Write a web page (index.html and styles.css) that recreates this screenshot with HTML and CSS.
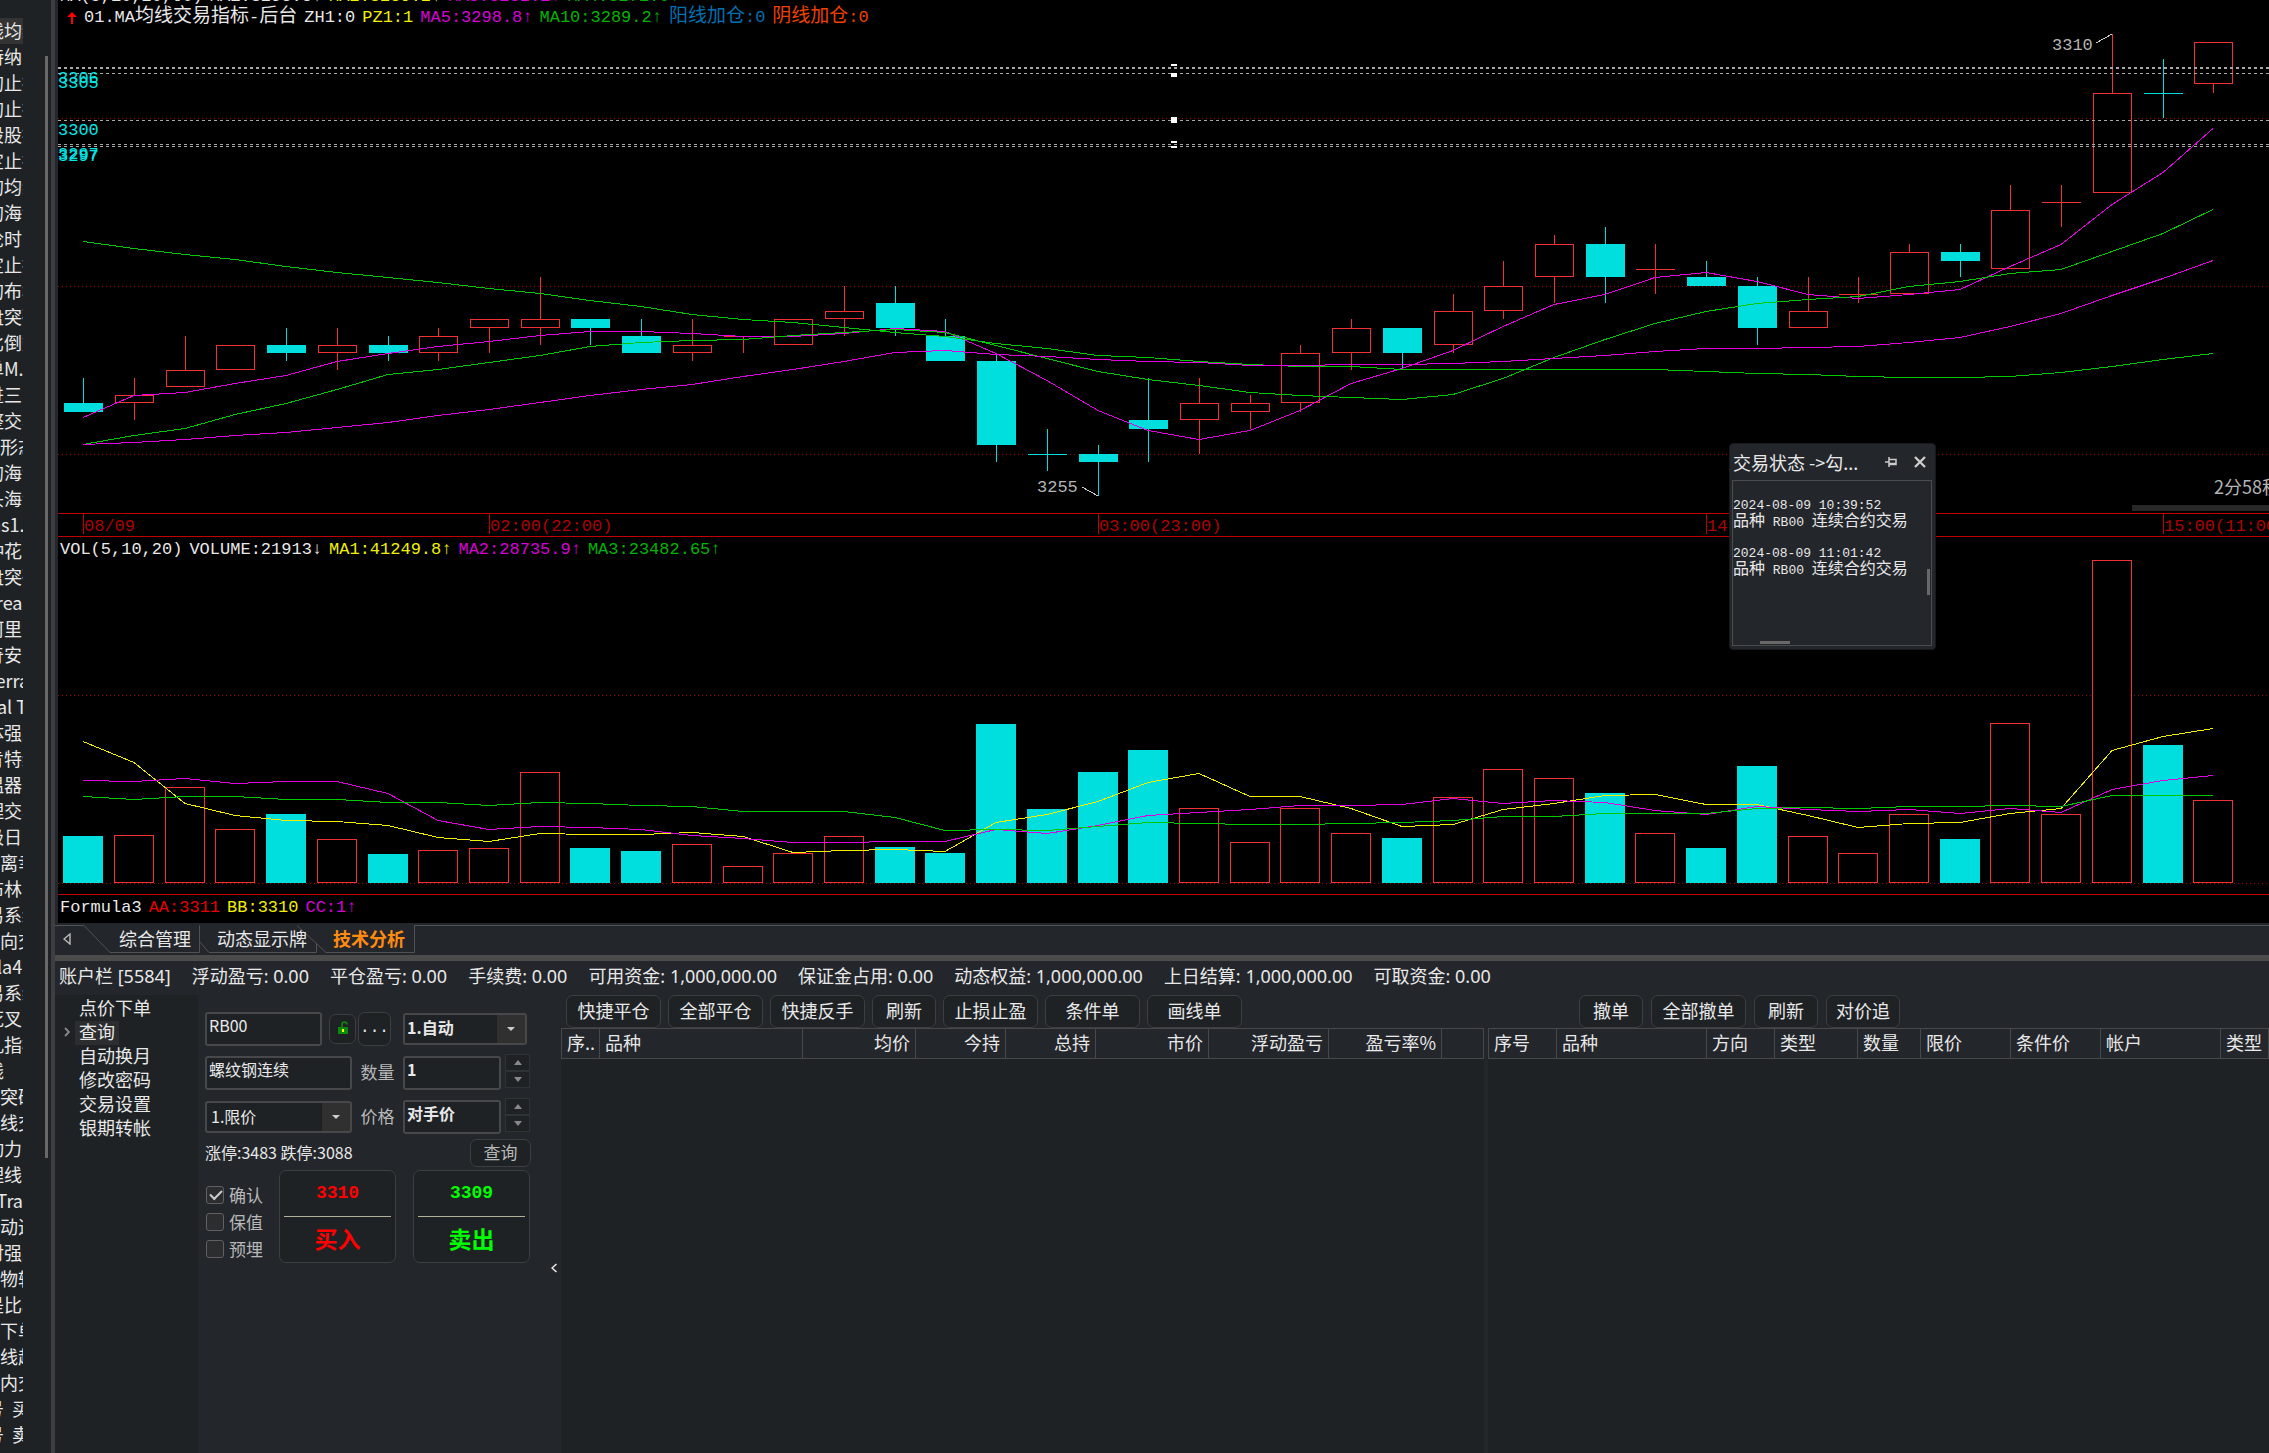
FILE: index.html
```html
<!DOCTYPE html>
<html lang="zh-CN">
<head>
  <meta charset="UTF-8">
  <meta name="viewport" content="width=device-width, initial-scale=1.0">
  <title>技术分析 - RB00 螺纹钢连续</title>
  <link rel="stylesheet" href="styles.css">
</head>
<body>
<div class="app">

  <aside class="sidebar">
    <ul class="formula-list" id="formulaList"></ul>
    <div class="sidebar-thumb"></div>
  </aside>

  <main class="main">

    <!-- K线 + 成交量 -->
    <section class="charts">
      <div class="pane">
        <svg id="priceChart" class="plot"></svg>
        <div class="legend legend-top">
          <span class="white">MA(5,10,20,60)</span>
          <span class="white">MA1:3298.8↑</span>
          <span class="yellow">MA2:3289.2↑</span>
          <span class="magenta">MA3:3282.1↑</span>
          <span class="green">MA4:3272.0↑</span>
        </div>
        <div class="legend legend-second">
          <svg class="up-mark" viewBox="0 0 10 12"><path d="M5 0 10 5H6V12H4V5H0Z" fill="#f00"/></svg>
          <span class="white">01.MA<b>均线交易指标</b>-<b>后台</b></span>
          <span class="white">ZH1:0</span>
          <span class="yellow">PZ1:1</span>
          <span class="magenta">MA5:3298.8↑</span>
          <span class="green">MA10:3289.2↑</span>
          <span class="blue"><b>阳线加仓</b>:0</span>
          <span class="orange"><b>阴线加仓</b>:0</span>
        </div>
        <div class="countdown">2分58秒</div>
        <div class="pane-thumb"></div>
      </div>

      <div class="time-axis"><svg id="timeAxis" class="plot"></svg></div>

      <div class="pane">
        <svg id="volumeChart" class="plot"></svg>
        <div class="legend">
          <span class="white">VOL(5,10,20)</span>
          <span class="white">VOLUME:21913↓</span>
          <span class="yellow">MA1:41249.8↑</span>
          <span class="magenta">MA2:28735.9↑</span>
          <span class="green">MA3:23482.65↑</span>
        </div>
      </div>

      <div class="formula-pane">
        <div class="legend">
          <span class="white">Formula3</span>
          <span class="red">AA:3311</span>
          <span class="yellow">BB:3310</span>
          <span class="magenta">CC:1↑</span>
        </div>
      </div>

      <div class="popup">
        <div class="popup-title">
          <span>交易状态 -&gt;勾...</span>
          <svg class="pin" viewBox="0 0 12 12"><path d="M0 6H4M4 1V11M4 3.5H11V8.5H4M4 7.5H11" fill="none" stroke="#ccc" stroke-width="1.5"/></svg>
          <svg class="close" viewBox="0 0 12 12"><path d="M1 1 11 11M11 1 1 11" stroke="#ccc" stroke-width="2.4"/></svg>
        </div>
        <div class="popup-body">
          <p>2024-08-09 10:39:52</p>
          <p><b>品种</b> RB00 <b>连续合约交易</b></p>
          <p class="spaced">2024-08-09 11:01:42</p>
          <p><b>品种</b> RB00 <b>连续合约交易</b></p>
          <i class="thumb-v"></i>
          <i class="thumb-h"></i>
        </div>
      </div>
    </section>

    <nav class="tabs">
      <svg class="tab-lines" width="362" height="32"><path d="M0 2.5H29L55 29.5H144.500V2.5M145 19 154 29.500H261.500V20M242 2.5 271 29.500H359.500V2.500" fill="none" stroke="#505255"/></svg>
      <svg class="tab-prev" viewBox="0 0 8 12"><path d="M7 1V11L1 6Z" fill="none" stroke="#bbb" stroke-width="1.4"/></svg>
      <a href="#">综合管理</a>
      <a href="#">动态显示牌</a>
      <a href="#" class="active">技术分析</a>
    </nav>

    <div class="splitter"></div>

    <div class="account">
      <span>账户栏 [5584]</span>
      <span>浮动盈亏: 0.00</span>
      <span>平仓盈亏: 0.00</span>
      <span>手续费: 0.00</span>
      <span>可用资金: 1,000,000.00</span>
      <span>保证金占用: 0.00</span>
      <span>动态权益: 1,000,000.00</span>
      <span>上日结算: 1,000,000.00</span>
      <span>可取资金: 0.00</span>
    </div>

    <section class="trade">
      <ul class="tree">
        <li><a href="#">点价下单</a></li>
        <li class="selected"><svg viewBox="0 0 6 10"><path d="M1 1 5 5 1 9" fill="none" stroke="#888" stroke-width="1.8"/></svg><a href="#">查询</a></li>
        <li><a href="#">自动换月</a></li>
        <li><a href="#">修改密码</a></li>
        <li><a href="#">交易设置</a></li>
        <li><a href="#">银期转帐</a></li>
      </ul>

      <form class="order">
        <div class="order-row">
          <input class="field w-code" type="text" value="RB00" aria-label="合约代码">
          <button type="button" class="btn btn-lock" aria-label="锁定">
            <svg viewBox="0 0 12 14"><path d="M5 6V3.500A2.500 2.500 0 0 1 10 3.500" fill="none" stroke="#0a8a0a" stroke-width="1.6"/><rect x="1" y="6" width="10" height="7" fill="#0a8a0a"/><rect x="5" y="8" width="2" height="3" fill="#ff0"/></svg>
          </button>
          <button type="button" class="btn btn-more">...</button>
          <span class="combo w-auto"><select class="strong" aria-label="开平"><option>1.自动</option></select></span>
        </div>
        <div class="order-row">
          <input class="field w-name" type="text" value="螺纹钢连续" aria-label="合约名称">
          <label for="qty">数量</label>
          <input class="field strong w-num" type="text" id="qty" value="1">
          <span class="spin"><button type="button" aria-label="增加数量"></button><button type="button" class="down" aria-label="减少数量"></button></span>
        </div>
        <div class="order-row">
          <span class="combo w-name"><select aria-label="报价方式"><option>1.限价</option></select></span>
          <label for="price">价格</label>
          <input class="field strong w-num" type="text" id="price" value="对手价">
          <span class="spin"><button type="button" aria-label="提高价格"></button><button type="button" class="down" aria-label="降低价格"></button></span>
        </div>
        <div class="order-row limits">
          <span>涨停:3483 跌停:3088</span>
          <button type="button" class="btn btn-query">查询</button>
        </div>
        <div class="order-row actions">
          <div class="checks">
            <label><input type="checkbox" checked>确认</label>
            <label><input type="checkbox">保值</label>
            <label><input type="checkbox">预埋</label>
          </div>
          <button type="button" class="btn deal buy"><span>3310</span><strong>买入</strong></button>
          <button type="button" class="btn deal sell"><span>3309</span><strong>卖出</strong></button>
        </div>
        <svg class="collapse" viewBox="0 0 6 10"><path d="M5.500 1 1 5 5.500 9" fill="none" stroke="#eee" stroke-width="1.500"/></svg>
      </form>

      <div class="positions">
        <div class="toolbar">
          <button type="button" class="btn wide">快捷平仓</button>
          <button type="button" class="btn wide">全部平仓</button>
          <button type="button" class="btn wide">快捷反手</button>
          <button type="button" class="btn narrow">刷新</button>
          <button type="button" class="btn wide">止损止盈</button>
          <button type="button" class="btn wide">条件单</button>
          <button type="button" class="btn wide">画线单</button>
        </div>
        <table>
          <colgroup><col class="c38"><col class="c203"><col class="c113"><col class="c90"><col class="c90"><col class="c113"><col class="c120"><col class="c113"><col></colgroup>
          <thead><tr><th>序..</th><th>品种</th><th class="num">均价</th><th class="num">今持</th><th class="num">总持</th><th class="num">市价</th><th class="num">浮动盈亏</th><th class="num">盈亏率%</th><th></th></tr></thead>
        </table>
      </div>

      <div class="orders">
        <div class="toolbar">
          <button type="button" class="btn narrow">撤单</button>
          <button type="button" class="btn wide">全部撤单</button>
          <button type="button" class="btn narrow">刷新</button>
          <button type="button" class="btn medium">对价追</button>
        </div>
        <table>
          <colgroup><col class="c68"><col class="c150"><col class="c68"><col class="c83"><col class="c63"><col class="c90"><col class="c90"><col class="c120"><col></colgroup>
          <thead><tr><th>序号</th><th>品种</th><th>方向</th><th>类型</th><th>数量</th><th>限价</th><th>条件价</th><th>帐户</th><th>类型</th></tr></thead>
        </table>
      </div>
    </section>

  </main>
</div>
<script src="chart.js"></script>
</body>
</html>
```
FILE: styles.css
```css
* { box-sizing: border-box; }

html, body { height: 100%; }

body {
  margin: 0;
  background: #23262b;
  color: #e8e8e8;
  font-family: "Noto Sans CJK SC", "Noto Sans", sans-serif;
  font-size: 18px;
  line-height: 24px;
  overflow: hidden;
}

a { color: inherit; text-decoration: none; }

ul { list-style: none; margin: 0; padding: 0; }

button, input, select {
  font: inherit;
  color: inherit;
}

.app {
  display: flex;
  height: 100vh;
}

/* formula list on the left */
.sidebar {
  position: relative;
  flex: none;
  width: 55px;
  padding-top: 18px;
  background: #1e2225;
  border-right: 4px solid #3c3e41;
  overflow: hidden;
}

.formula-list { width: 23px; }

.formula-list li {
  height: 26px;
  line-height: 24px;
  white-space: pre;
  overflow: hidden;
}

.formula-list li.current { background: #333; }

.formula-list .cut { margin-left: -14px; }

.sidebar-thumb {
  position: absolute;
  left: 45px;
  top: 56px;
  bottom: 295px;
  width: 3px;
  background: #686868;
}

.main {
  flex: 1;
  min-width: 0;
  display: grid;
  grid-template-rows: 923fr 32px 6px 34px 458fr;
}

/* charts */
.charts {
  position: relative;
  display: grid;
  grid-template-rows: 513fr 24px 357fr 29px;
  min-height: 0;
  margin-left: 3px;
  background: #000;
}

.pane, .time-axis {
  position: relative;
  min-height: 0;
  overflow: hidden;
}

.plot {
  position: absolute;
  width: 100%;
  height: 100%;
  shape-rendering: crispEdges;
}

.time-axis {
  border-top: 1px solid #c00000;
  border-bottom: 1px solid #c00000;
}

.formula-pane { border-top: 1px solid #c00000; }

.legend {
  position: relative;
  display: flex;
  align-items: center;
  gap: 7px;
  height: 25px;
  padding-left: 2px;
  font-family: "Liberation Mono", "Noto Sans CJK SC", monospace;
  font-size: 17px;
  white-space: nowrap;
}

.legend b, .popup b { font-weight: 400; }

.legend b { font-size: 19px; }

.legend-top { margin-top: -16px; }

.legend-second { margin-top: -4px; }

.up-mark { width: 10px; height: 12px; margin-left: 7px; }

.white { color: #e8e8e8; }
.yellow { color: #f0f000; }
.magenta { color: #d800d8; }
.green { color: #00b400; }
.blue { color: #0070b0; }
.orange { color: #f04000; }
.red { color: #e80000; }

.plot text {
  font-family: "Liberation Mono", monospace;
  font-size: 17px;
}

.countdown {
  position: absolute;
  right: -11px;
  bottom: 15px;
  color: #b4b4b4;
}

.pane-thumb {
  position: absolute;
  right: 0;
  bottom: 2px;
  width: 137px;
  height: 6px;
  background: #282828;
}

/* floating status window */
.popup {
  position: absolute;
  right: 333px;
  top: 443px;
  width: 207px;
  height: 207px;
  display: flex;
  flex-direction: column;
  padding: 0 3px 3px 2px;
  background: #23262b;
  border: 1px solid #17191b;
  border-radius: 4px;
}

.popup-title {
  display: flex;
  align-items: center;
  height: 36px;
  padding: 0 6px 0 1px;
}

.popup-title span { flex: 1; }

.pin { width: 12px; height: 12px; margin-right: 17px; }

.close { width: 12px; height: 12px; }

.popup-body {
  position: relative;
  flex: 1;
  padding-top: 17px;
  border: 1px solid #4a4c4f;
  font-family: "Liberation Mono", "Noto Sans CJK SC", monospace;
  font-size: 13px;
  line-height: 16px;
  white-space: nowrap;
}

.popup-body b { font-size: 16px; }

.popup-body p { margin: 0; height: 16px; }

.popup-body .spaced { margin-top: 16px; }

.thumb-v, .thumb-h { position: absolute; background: #686868; }

.thumb-v { right: 1px; top: 88px; width: 3px; height: 26px; }

.thumb-h { left: 27px; bottom: 1px; width: 30px; height: 3px; }

/* page tabs */
.tabs {
  position: relative;
  display: flex;
  align-items: center;
  gap: 26px;
  padding-left: 8px;
}

.tabs::after {
  content: "";
  position: absolute;
  left: 359px;
  right: 0;
  top: 2px;
  height: 1px;
  background: #505255;
}

.tab-lines { position: absolute; left: 0; top: 0; }

.tab-prev { width: 8px; height: 12px; margin-right: 22px; }

.tabs a { position: relative; padding-bottom: 2px; }

.tabs .active { color: #ff8c10; font-weight: 700; }

.splitter { background: #4b4b4b; }

.account {
  display: flex;
  align-items: center;
  gap: 21px;
  padding: 0 0 4px 4px;
  font-family: "Noto Sans", "Noto Sans CJK SC", sans-serif;
  white-space: nowrap;
}

/* trading panel */
.trade {
  display: flex;
  min-height: 0;
}

.tree {
  flex: none;
  width: 143px;
  background: #1e2225;
}

.tree li {
  position: relative;
  height: 24px;
  padding-left: 20px;
}

.tree a {
  display: inline-block;
  height: 24px;
  padding: 0 4px;
  line-height: 21px;
}

.tree .selected a { background: #2c2d2f; }

.tree svg {
  position: absolute;
  left: 9px;
  top: 8px;
  width: 6px;
  height: 10px;
}

.order {
  position: relative;
  flex: none;
  display: flex;
  flex-direction: column;
  gap: 8px;
  width: 363px;
  padding: 16px 30px 0 7px;
  font-size: 16px;
}

.order-row {
  display: flex;
  align-items: center;
  height: 36px;
}

.field, .combo {
  height: 34px;
  border: 2px solid #47484a;
  border-radius: 3px;
  background: #1e2225;
}

.field { padding: 0 2px 8px; line-height: 22px; }

.strong { font-weight: 700; }

.w-code { width: 117px; margin-right: 7px; }
.w-name { width: 147px; }
.w-num { width: 98px; margin-right: 4px; }
.w-auto { width: 124px; }

.combo { position: relative; height: 32px; }

.combo select {
  display: block;
  width: 100%;
  height: 28px;
  padding: 0 4px 3px;
  border: 0;
  background: none;
  appearance: none;
}

.combo .strong { padding: 0 2px 7px; }

.combo::after {
  content: "";
  position: absolute;
  right: 0;
  top: 0;
  width: 28px;
  height: 28px;
  background: #303031;
  pointer-events: none;
}

.combo::before {
  content: "";
  position: absolute;
  z-index: 1;
  right: 10px;
  top: 12px;
  border: 4px solid transparent;
  border-top-color: #ccc;
  border-bottom: 0;
  pointer-events: none;
}

.order-row > label {
  width: 51px;
  padding-bottom: 3px;
  text-align: center;
  color: #b8b8b8;
  font-size: 17px;
}

.spin {
  display: flex;
  flex-direction: column;
  width: 25px;
  margin-bottom: 4px;
}

.spin button {
  display: flex;
  align-items: center;
  justify-content: center;
  height: 17px;
  padding: 0;
  border: 1px solid #303335;
  background: #1e2225;
}

.spin button::before {
  content: "";
  border: 4px solid transparent;
  border-top: 0;
  border-bottom: 5px solid #888;
}

.spin .down::before { transform: rotate(180deg); }

.btn {
  padding: 0 0 3px;
  border: 1px solid #3c3e41;
  border-radius: 7px;
  background: #1e2225;
  white-space: nowrap;
}

.btn-lock { width: 27px; height: 30px; margin-right: 2px; }

.btn-lock svg { display: block; width: 12px; height: 14px; margin: auto; }

.btn-more {
  width: 33px;
  height: 34px;
  margin-right: 12px;
  font-family: "Liberation Mono", monospace;
}

.limits {
  justify-content: space-between;
  height: 28px;
  margin-top: -4px;
}

.limits span { padding-bottom: 2px; }

.btn-query { width: 61px; height: 28px; color: #b8b8b8; font-size: 17px; }

.actions { height: 93px; gap: 17px; margin-top: -5px; }

.checks {
  display: flex;
  flex-direction: column;
  flex: none;
  gap: 3px;
  width: 57px;
  padding-top: 10px;
}

.checks label {
  display: flex;
  align-items: center;
  gap: 5px;
  color: #b8b8b8;
  font-size: 17px;
  white-space: nowrap;
}

.checks input {
  appearance: none;
  flex: none;
  width: 18px;
  height: 18px;
  margin: 0 0 0 1px;
  border: 1px solid #606060;
  border-radius: 3px;
  background: #2c2d2f;
}

.checks input:checked::before {
  content: "";
  display: block;
  width: 10px;
  height: 5px;
  margin: 3px;
  border: solid #ccc;
  border-width: 0 0 2px 2px;
  transform: rotate(-45deg);
}

.deal {
  display: flex;
  flex: none;
  flex-direction: column;
  width: 117px;
  height: 93px;
  padding: 0 4px;
}

.deal span {
  height: 46px;
  line-height: 44px;
  border-bottom: 1px solid #b4b09c;
  font-family: "Liberation Mono", monospace;
  font-size: 18px;
  font-weight: 700;
}

.deal strong { line-height: 43px; font-size: 23px; }

.deal span, .deal strong { width: 100%; }

.buy { color: #f00; }

.sell { color: #0f0; }

.collapse {
  position: absolute;
  right: 4px;
  top: 268px;
  width: 6px;
  height: 10px;
}

.positions, .orders {
  min-width: 0;
  background: #1e2225;
}

.positions { flex: none; width: 923px; }

.orders { flex: 1; margin-left: 4px; overflow: hidden; }

.toolbar {
  display: flex;
  gap: 7px;
  height: 33px;
  padding-left: 5px;
  background: #23262b;
}

.orders .toolbar { padding-left: 91px; gap: 8px; }

.wide { width: 95px; }
.medium { width: 74px; }
.narrow { width: 64px; }

table {
  width: 100%;
  table-layout: fixed;
  border-collapse: collapse;
}

th {
  height: 30px;
  padding: 0 5px 3px;
  border: 1px solid #47484a;
  background: #23262b;
  font-weight: 400;
  line-height: 24px;
  text-align: left;
  white-space: nowrap;
}

.num { text-align: right; }

.c38 { width: 38px; }
.c63 { width: 63px; }
.c68 { width: 68px; }
.c83 { width: 83px; }
.c90 { width: 90px; }
.c113 { width: 113px; }
.c120 { width: 120px; }
.c150 { width: 150px; }
.c203 { width: 203px; }
```
FILE: chart.js
```js
const UP = '#f03232';
const DOWN = '#00dede';
const GRID = '#a00000';

// open, high, low, close (minus 3200)
const candles = [
  [66, 69, 65, 65], [66, 69, 64, 67], [68, 74, 68, 70], [70, 73, 70, 73], [73, 75, 71, 72],
  [72, 75, 70, 73], [73, 74, 71, 72], [72, 75, 71, 74], [75, 76, 72, 76], [75, 81, 73, 76],
  [76, 76, 73, 75], [74, 76, 72, 72], [72, 76, 71, 73], [74, 74, 72, 74], [73, 76, 73, 76],
  [76, 80, 74, 77], [78, 80, 74, 75], [74, 76, 71, 71], [71, 72, 59, 61], [60, 63, 58, 60, 1],
  [60, 61, 55, 59], [64, 69, 59, 63], [64, 69, 60, 66], [65, 67, 63, 66], [66, 73, 65, 72],
  [72, 76, 70, 75], [75, 75, 70, 72], [73, 79, 72, 77], [77, 83, 76, 80], [81, 86, 78, 85],
  [85, 87, 78, 81], [82, 85, 79, 82], [81, 83, 80, 80], [80, 81, 73, 75], [75, 81, 75, 77],
  [79, 81, 78, 79], [79, 85, 79, 84], [84, 85, 81, 83], [82, 92, 82, 89], [90, 92, 87, 90],
  [91, 110, 91, 103], [103, 107, 100, 103, 1], [104, 109, 103, 109]
];

// thousands
const volumes = [
  12.5, 12.8, 25.6, 14.2, 18.4, 11.7, 7.5, 8.8, 9.1, 29.6, 9.3, 8.5, 10.4, 4.5, 8.0,
  12.5, 9.6, 8.0, 42.2, 19.5, 29.6, 35.5, 20.0, 10.7, 19.8, 13.1, 12.0, 22.7, 30.4, 27.8,
  23.8, 13.1, 9.3, 31.2, 12.3, 8.0, 18.4, 11.5, 42.7, 18.4, 86.0, 36.8, 21.9
];

const ma60 = [
  85.3, 84.5, 83.8, 83.2, 82.4, 81.7, 81.0, 80.4, 79.7, 79.1, 78.3, 77.6, 76.7, 76.1, 75.7,
  75.1, 74.5, 74.0, 73.2, 72.6, 71.8, 71.5, 71.0, 70.7, 70.4, 70.4, 70.1, 70.1, 70.1, 70.1,
  70.1, 70.1, 69.9, 69.6, 69.5, 69.2, 69.1, 69.1, 69.2, 69.7, 70.5, 71.3, 72.0
];

const timeLabels = { 0: '08/09', 8: '02:00(22:00)', 20: '03:00(23:00)', 32: '14:00(10:00)', 41: '15:00(11:00)' };

// head = values for the bars that have no full window yet
function ma(values, n, head) {
  return values.map((v, i) => {
    if (i < n - 1) return head[i];
    return values.slice(i - n + 1, i + 1).reduce((a, b) => a + b, 0) / n;
  });
}

function add(svg, tag, attrs, text) {
  const el = document.createElementNS('http://www.w3.org/2000/svg', tag);
  for (const key in attrs) el.setAttribute(key, attrs[key]);
  if (text) el.textContent = text;
  svg.appendChild(el);
}

function centerX(svg, i) {
  return Math.round(svg.clientWidth / 43.6 * (i + 0.5));
}

function hline(svg, y, color, dash) {
  y = Math.floor(y) + 0.5;
  add(svg, 'line', { x1: 0, x2: svg.clientWidth, y1: y, y2: y, stroke: color, 'stroke-dasharray': dash });
}

function curve(svg, values, toY, color) {
  const points = values.map((v, i) => centerX(svg, i) + ',' + (Math.floor(toY(v)) + 0.5)).join(' ');
  add(svg, 'polyline', { points: points, fill: 'none', stroke: color });
}

function box(svg, i, width, top, bottom, color, filled) {
  const x = centerX(svg, i) - Math.floor(width / 2);
  if (filled) {
    add(svg, 'rect', { x: x, y: top, width: width, height: Math.max(bottom - top, 1), fill: color });
  } else {
    add(svg, 'rect', { x: x + 0.5, y: top + 0.5, width: width - 1, height: Math.max(bottom - top - 1, 0), fill: '#000', stroke: color });
  }
}

function drawPrice() {
  const svg = document.getElementById('priceChart');
  svg.innerHTML = '';
  const toY = p => (114.1 - p) / 61.1 * svg.clientHeight;

  [100, 80, 60].forEach(p => hline(svg, toY(p), GRID, '1 3'));

  candles.forEach((c, i) => {
    const [open, high, low, close, falling] = c;
    const down = close < open || falling;
    const color = down ? DOWN : UP;
    const x = centerX(svg, i) + 0.5;
    add(svg, 'line', { x1: x, x2: x, y1: Math.floor(toY(high)), y2: Math.floor(toY(low)), stroke: color });
    const top = Math.floor(toY(Math.max(open, close)));
    const bottom = Math.floor(toY(Math.min(open, close)));
    box(svg, i, 39, top, bottom, color, down || open === close);
  });

  // price alert lines
  [106.1, 105.9, 105.4, 99.8, 96.9, 96.7].forEach(p => hline(svg, toY(p), '#a8a8a8', '3 3'));
  [[106.4, 2], [105.4, 4], [100.1, 6], [97.3, 2], [96.6, 2]].forEach(([p, h]) => {
    add(svg, 'rect', { x: Math.round(svg.clientWidth * 0.5035), y: Math.floor(toY(p)), width: 6, height: h, fill: '#fff' });
  });
  [[3306, 106], [3305, 105.4], [3300, 99.8], [3297, 96.9], [3297, 96.7]].forEach(([label, p]) => {
    add(svg, 'text', { x: 0, y: Math.floor(toY(p)) + 15, fill: '#00e8e8' }, label);
  });

  const closes = candles.map(c => c[3]);
  curve(svg, ma(closes, 5, [64.4, 67, 67.4, 68.4]), toY, '#e000e0');
  curve(svg, ma(closes, 10, [61.2, 62.2, 63.1, 64.7, 66.1, 67.7, 69.5, 70.1, 70.9]), toY, '#00c800');
  curve(svg, ma60, toY, '#00c800');
  curve(svg, ma(closes, 20, [61.2, 61.4, 61.7, 62.2, 62.6, 63.2, 63.8, 64.6, 65.3, 66.2,
    67, 67.7, 68.3, 69.2, 70.1, 71.1, 72.1, 72.3, 71.9]), toY, '#e000e0');

  // highest and lowest price
  const hx = centerX(svg, 40), hy = Math.floor(toY(110));
  add(svg, 'line', { x1: hx - 16, y1: hy + 9, x2: hx, y2: hy, stroke: '#ccc' });
  add(svg, 'text', { x: hx - 60, y: hy + 16, fill: '#b4b4b4' }, '3310');
  const lx = centerX(svg, 20), ly = Math.floor(toY(55));
  add(svg, 'line', { x1: lx - 16, y1: ly - 9, x2: lx, y2: ly, stroke: '#ccc' });
  add(svg, 'text', { x: lx - 61, y: ly - 4, fill: '#b4b4b4' }, '3255');
}

function drawTimes() {
  const svg = document.getElementById('timeAxis');
  svg.innerHTML = '';
  for (const i in timeLabels) {
    const x = centerX(svg, Number(i));
    add(svg, 'line', { x1: x + 0.5, x2: x + 0.5, y1: 0, y2: 20, stroke: '#c00000' });
    add(svg, 'text', { x: x + 1, y: 17, fill: '#b00000' }, timeLabels[i]);
  }
}

function drawVolume() {
  const svg = document.getElementById('volumeChart');
  svg.innerHTML = '';
  const toY = v => svg.clientHeight * (346 - v / 0.267) / 357;
  const base = Math.floor(toY(0));

  hline(svg, toY(50), GRID, '1 3');
  hline(svg, base, GRID, '1 3');

  volumes.forEach((v, i) => {
    const [open, , , close, falling] = candles[i];
    const down = close < open || falling;
    box(svg, i, 40, Math.floor(toY(v)), base, down ? DOWN : UP, down);
  });

  curve(svg, ma(volumes, 5, [37.9, 32.3, 21.1, 17.9]), toY, '#f0f000');
  curve(svg, ma(volumes, 10, [27.5, 27, 27.8, 26.7, 27, 27.2, 23.8, 16.6, 14.4]), toY, '#e000e0');
  curve(svg, ma(volumes, 20, [23.2, 22.4, 23, 23, 22.4, 22.4, 21.4, 21.4, 20.8, 21.6,
    21.1, 20.8, 20.3, 19.2, 19, 19, 17.6, 13.9, 14.4]), toY, '#00c800');
}

function drawAll() {
  drawPrice();
  drawTimes();
  drawVolume();
}

// a leading "<" marks a name scrolled past its first glyph
const formulas = ['<线均线', '<特纳', '<的止损', '<的止损', '<股股指', '<定止损', '<的均线', '<的海龟', '<论时间', '<定止损',
  '<的布林', '<盘突破', '<比倒数', '<单M.', '<进三', '<整交易', '形态', '<的海龟', '<头海龟', '<ias1.', '<种花', '<盘突破',
  '<Trea', '<阿里', '<奇安', '<Terra', '<ual T', '<体强弱', '<肯特纳', '<温器', '<理交易', '<极日', '离幸', '<布林', '<易系统',
  '向交', '<ula4', '<易系统', '<死叉', '<孔指标', '<线', '突破', '线交', '<动力', '<理线', '<uTrac', '动追', '<对强弱', '物转',
  '<是比率', '下单', '线趋', '内交', '<号  买', '<号  卖'];

const list = document.getElementById('formulaList');
formulas.forEach((name, i) => {
  const li = document.createElement('li');
  const div = document.createElement('div');
  if (name[0] === '<') div.className = 'cut';
  if (i === 0) li.className = 'current';
  div.textContent = name.replace('<', '');
  li.appendChild(div);
  list.appendChild(li);
});

drawAll();
window.addEventListener('resize', drawAll);
```
